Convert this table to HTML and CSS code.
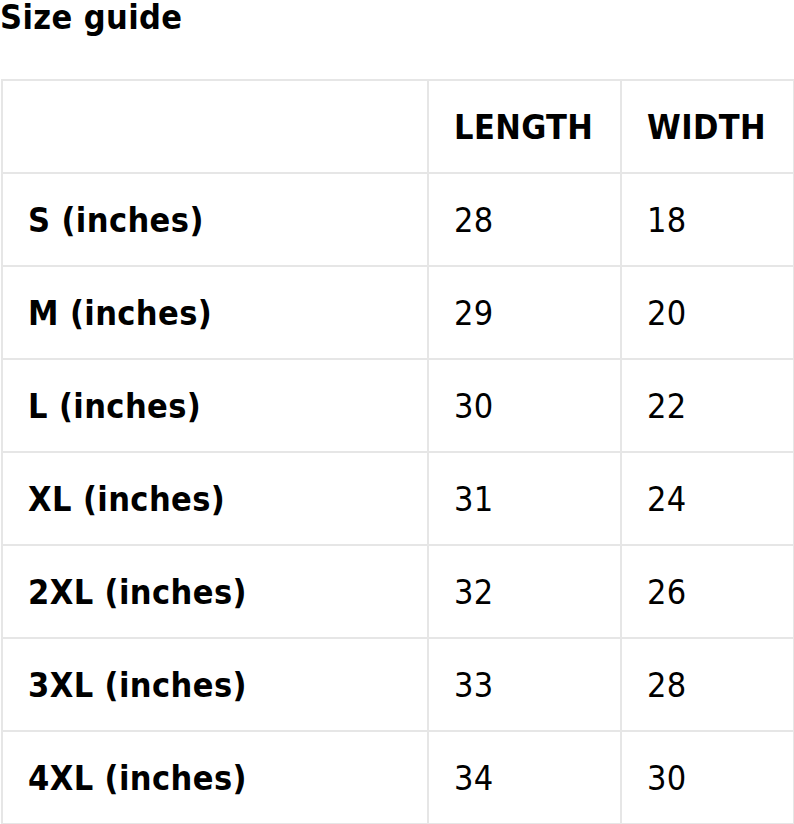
FILE: index.html
```html
<!DOCTYPE html>
<html lang="en">
<head>
<meta charset="utf-8">
<title>Size guide</title>
<link rel="stylesheet" href="styles.css">
</head>
<body>
<h2 class="title">Size guide</h2>
<table class="size-table">
  <colgroup>
    <col class="col-size">
    <col class="col-length">
    <col class="col-width">
  </colgroup>
  <thead>
    <tr>
      <th></th>
      <th>LENGTH</th>
      <th>WIDTH</th>
    </tr>
  </thead>
  <tbody>
    <tr><th>S (inches)</th><td>28</td><td>18</td></tr>
    <tr><th>M (inches)</th><td>29</td><td>20</td></tr>
    <tr><th>L (inches)</th><td>30</td><td>22</td></tr>
    <tr><th>XL (inches)</th><td>31</td><td>24</td></tr>
    <tr><th>2XL (inches)</th><td>32</td><td>26</td></tr>
    <tr><th>3XL (inches)</th><td>33</td><td>28</td></tr>
    <tr><th>4XL (inches)</th><td>34</td><td>30</td></tr>
  </tbody>
</table>
</body>
</html>
```
FILE: styles.css
```css
html, body {
  margin: 0;
  padding: 0;
  background: #ffffff;
}
body {
  font-family: "DejaVu Sans Condensed", "DejaVu Sans", sans-serif;
  font-stretch: condensed;
  color: #000000;
  width: 794px;
  letter-spacing: 0.4px;
}
.title {
  margin: 0 0 44px 0;
  font-size: 34px;
  line-height: 35px;
  font-weight: bold;
}
.size-table {
  border-collapse: collapse;
  table-layout: fixed;
  width: 792px;
  margin-left: 1px;
  font-size: 34px;
}
.col-size { width: 426px; }
.col-length { width: 193px; }
.col-width { width: 173px; }
.size-table th,
.size-table td {
  border: 2px solid #e6e6e6;
  height: 91px;
  padding: 0 0 0 25px;
  text-align: left;
  vertical-align: middle;
  line-height: 40px;
  box-sizing: border-box;
}
.size-table th { font-weight: bold; }
.size-table td { font-weight: normal; }
.size-table tr { height: 93px; }
```
